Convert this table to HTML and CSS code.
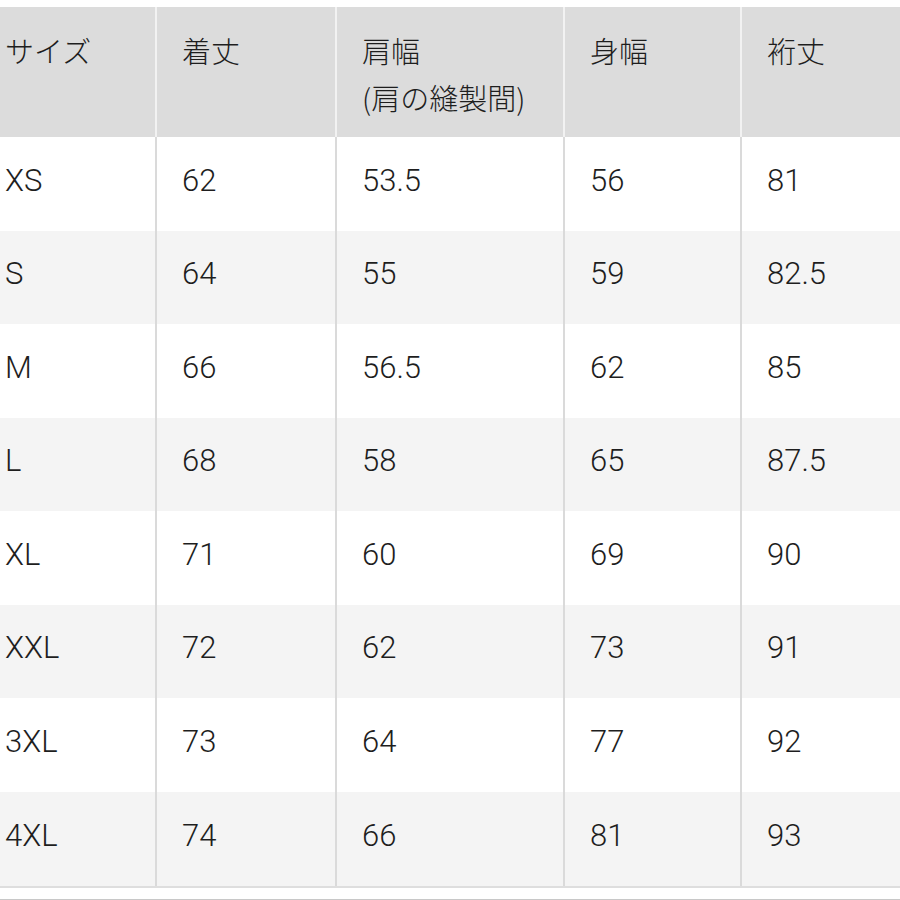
FILE: index.html
```html
<!DOCTYPE html>
<html lang="ja">
<head>
<meta charset="utf-8">
<link rel="stylesheet" href="styles.css">
</head>
<body>
<div class="page">
  <div class="table">
    <div class="row head">
      <div class="cell first">サイズ</div>
      <div class="cell">着丈</div>
      <div class="cell">肩幅<br>(肩の縫製間)</div>
      <div class="cell">身幅</div>
      <div class="cell">裄丈</div>
    </div>
    <div class="row odd"><div class="cell first">XS</div><div class="cell">62</div><div class="cell">53.5</div><div class="cell">56</div><div class="cell">81</div></div>
    <div class="row even"><div class="cell first">S</div><div class="cell">64</div><div class="cell">55</div><div class="cell">59</div><div class="cell">82.5</div></div>
    <div class="row odd"><div class="cell first">M</div><div class="cell">66</div><div class="cell">56.5</div><div class="cell">62</div><div class="cell">85</div></div>
    <div class="row even"><div class="cell first">L</div><div class="cell">68</div><div class="cell">58</div><div class="cell">65</div><div class="cell">87.5</div></div>
    <div class="row odd"><div class="cell first">XL</div><div class="cell">71</div><div class="cell">60</div><div class="cell">69</div><div class="cell">90</div></div>
    <div class="row even"><div class="cell first">XXL</div><div class="cell">72</div><div class="cell">62</div><div class="cell">73</div><div class="cell">91</div></div>
    <div class="row odd"><div class="cell first">3XL</div><div class="cell">73</div><div class="cell">64</div><div class="cell">77</div><div class="cell">92</div></div>
    <div class="row even last"><div class="cell first">4XL</div><div class="cell">74</div><div class="cell">66</div><div class="cell">81</div><div class="cell">93</div></div>
  </div>
  <div class="rule"></div>
</div>
</body>
</html>
```

FILE: styles.css
```css
html, body {
  margin: 0;
  padding: 0;
  background: #ffffff;
}

.page {
  width: 900px;
  height: 900px;
  padding-top: 7px;
  box-sizing: border-box;
  font-family: Roboto, "Liberation Sans", "Noto Sans CJK JP", sans-serif;
  font-weight: 300;
  font-size: 31px;
  color: #1e1e1e;
  overflow: hidden;
}

.row {
  display: grid;
  grid-template-columns: 155px 180px 228px 177px 160px;
}

.cell {
  box-sizing: border-box;
  padding-left: 25px;
  border-left: 2px solid #dadada;
  display: flex;
  align-items: center;
  padding-bottom: 7px;
  white-space: nowrap;
}

.cell.first {
  border-left: none;
  padding-left: 5px;
}

.head {
  height: 130px;
  background: #dcdcdc;
}

.head .cell {
  display: block;
  padding-top: 20px;
  padding-bottom: 0;
  line-height: 47px;
  border-left-color: #f2f2f2;
  font-family: "Noto Sans CJK JP", sans-serif;
  font-weight: 300;
  font-size: 29px;
}

.head .cell.first {
  border-left: none;
}

.odd, .even {
  height: 93.5px;
}

.odd {
  background: #ffffff;
}

.even {
  background: #f4f4f4;
}

.last {
  border-bottom: 2px solid #dedede;
  height: 94px;
}

.rule {
  margin-top: 11px;
  height: 1px;
  background: #c8c8c8;
}
```
